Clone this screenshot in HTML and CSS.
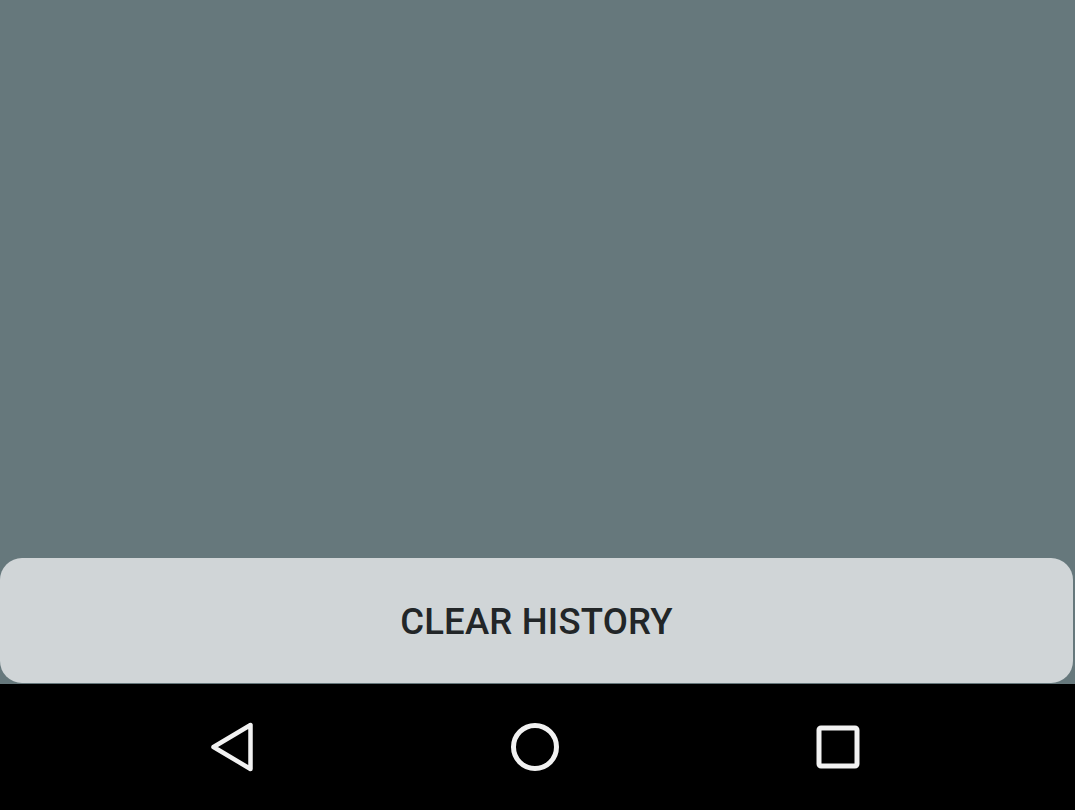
FILE: index.html
```html
<!DOCTYPE html>
<html>
<head>
<meta charset="utf-8">
<link rel="stylesheet" href="styles.css">
</head>
<body>
<div class="screen">
  <div class="content"></div>
  <div class="btn-row">
    <button class="clear-btn">CLEAR HISTORY</button>
  </div>
  <nav class="navbar">
    <div class="nav-item">
      <svg width="60" height="60" viewBox="0 0 60 60"><path d="M11.5 30 L48.5 8 L48.5 52 Z" fill="none" stroke="#f2f2f2" stroke-width="4.5" stroke-linejoin="round"/></svg>
    </div>
    <div class="nav-item">
      <svg width="60" height="60" viewBox="0 0 60 60"><circle cx="30" cy="30" r="21.5" fill="none" stroke="#f2f2f2" stroke-width="5"/></svg>
    </div>
    <div class="nav-item">
      <svg width="60" height="60" viewBox="0 0 60 60"><rect x="11" y="11" width="38" height="38" rx="2" fill="none" stroke="#f2f2f2" stroke-width="5"/></svg>
    </div>
  </nav>
</div>
</body>
</html>
```

FILE: styles.css
```css
html, body {
  margin: 0;
  padding: 0;
  height: 100%;
}
body {
  background: #66787c;
  font-family: Roboto, "Liberation Sans", sans-serif;
}
.screen {
  display: flex;
  flex-direction: column;
  height: 810px;
}
.content {
  flex: 1;
}
.btn-row {
  padding: 0 2px 1px 0;
}
.clear-btn {
  display: block;
  width: 100%;
  height: 125px;
  border: none;
  border-radius: 22px;
  background: #d0d5d7;
  color: #222628;
  font-family: Roboto, "Liberation Sans", sans-serif;
  font-weight: 500;
  font-size: 36.5px;
  letter-spacing: 0.2px;
  padding: 0;
  padding-top: 2px;
}
.navbar {
  height: 126px;
  background: #000;
  display: flex;
  justify-content: center;
  align-items: center;
  padding-right: 6px;
}
.nav-item {
  width: 303px;
  display: flex;
  justify-content: center;
  align-items: center;
}
```
